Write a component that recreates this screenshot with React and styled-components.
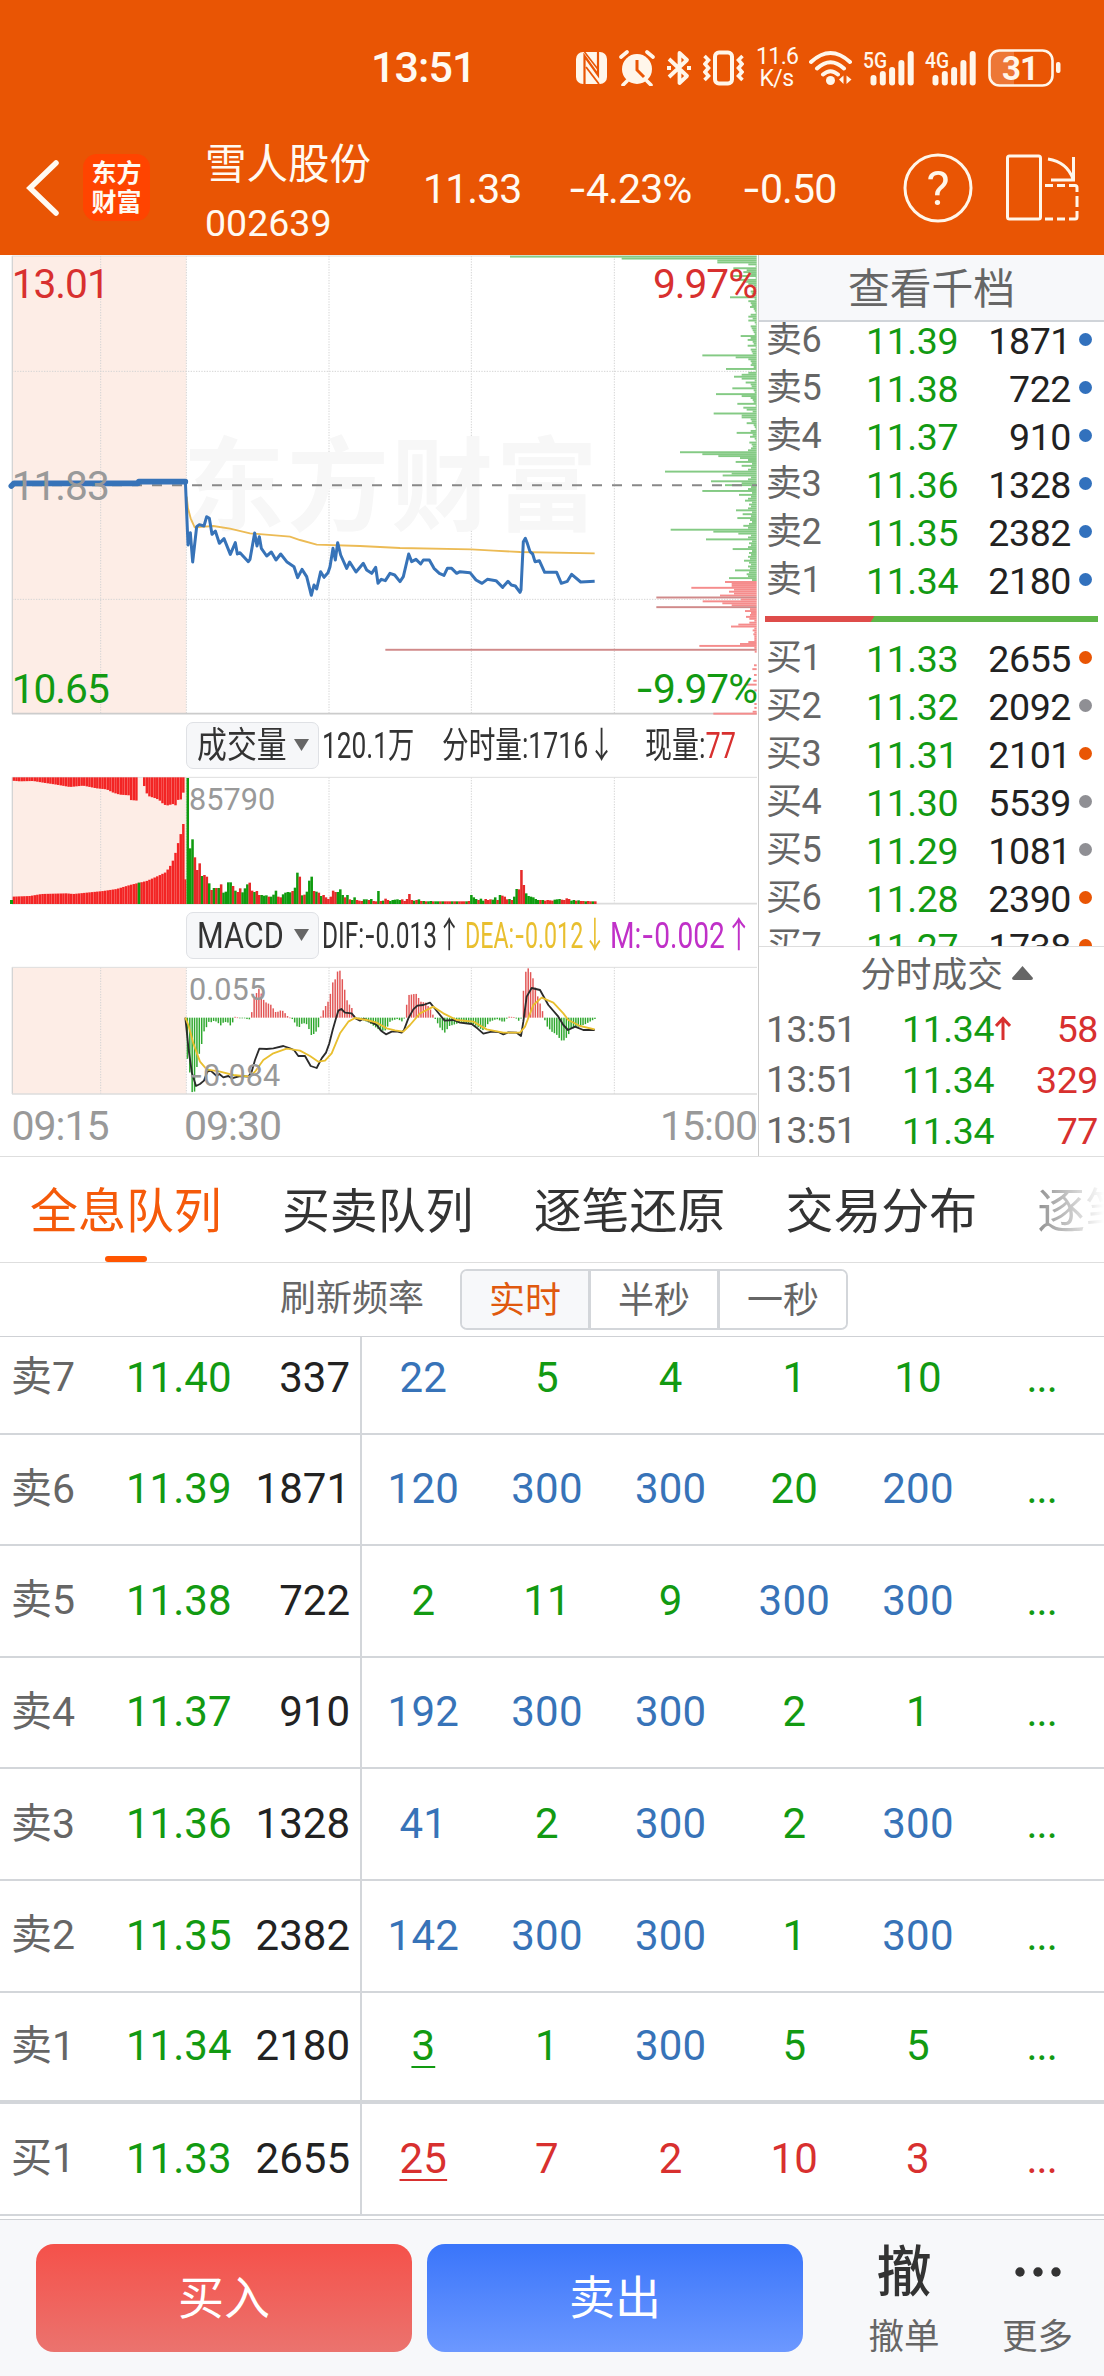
import React from "react";
import styled, { createGlobalStyle, css } from "styled-components";

const GlobalStyle = createGlobalStyle`
  * {
    box-sizing: border-box;
  }
  body {
    margin: 0;
    background: #fff;
    font-family: Roboto, "Noto Sans CJK SC", sans-serif;
    line-height: 1.2;
    color: #222;
  }
`;

const colors = {
  red: "#d8302f",
  green: "#129a12",
  blue: "#3773b8",
  orange: "#e95504",
  gray: "#666",
  light: "#999",
  dark: "#222",
  line: "#d3d6da",
};

const Phone = styled.div`
  width: 1104px;
  height: 2376px;
  overflow: hidden;
  display: flex;
  flex-direction: column;
`;

/* ---------- header ---------- */
const Header = styled.header`
  height: 255px;
  flex: none;
  background: ${colors.orange};
  color: #fffaf2;
`;
const StatusBar = styled.div`
  display: flex;
  align-items: center;
  gap: 12px;
  height: 136px;
  padding-left: 371px;
`;
const Clock = styled.div`
  width: 193px;
  font-size: 43px;
  font-weight: 500;
  letter-spacing: -0.9px;
`;
const Speed = styled.div`
  width: 41px;
  font-size: 23px;
  line-height: 22px;
  text-align: center;
  letter-spacing: -0.6px;
  white-space: nowrap;
`;
const TitleBar = styled.div`
  display: grid;
  grid-template-columns: 83px 122px 218px 145px 174px 161px 103px 1fr;
  grid-template-rows: 103px;
  align-items: center;
  height: 103px;
`;
const Logo = styled.div`
  width: 67px;
  height: 67px;
  border-radius: 14px;
  background: #ff4400;
  font-size: 25px;
  line-height: 29px;
  padding-top: 5px;
  font-weight: 700;
  text-align: center;
`;
const Stock = styled.div`
  padding-top: 12px;
  line-height: 59px;
`;
const StockName = styled.div`
  font-size: 41.5px;
`;
const StockCode = styled.div`
  font-size: 37.5px;
`;
const Quote = styled.div`
  font-size: 41px;
  letter-spacing: -0.9px;
  padding-top: 4px;
`;
// the hyphen in Roboto is too short for a minus sign
const Dash = styled.span`
  font-family: Inter, sans-serif;
`;

/* ---------- chart and order book ---------- */
const Market = styled.section`
  display: flex;
  height: 902px;
  flex: none;
  border-bottom: 1px solid #dedede;
`;
const Charts = styled.div`
  width: 758px;
  display: flex;
  flex-direction: column;
`;
const ChartSvg = styled.svg`
  display: block;
  flex: none;
`;
const Indicators = styled.div`
  display: flex;
  align-items: center;
  height: 61px;
  padding-left: 186px;
`;
const Picker = styled.div`
  display: flex;
  align-items: center;
  justify-content: space-between;
  width: 133px;
  height: 47px;
  padding: 0 9px 0 10px;
  border: 1px solid #dfe1e5;
  border-radius: 7px;
  background: #f6f7f9;
`;
const Slot = styled.div`
  width: ${(p) => p.$width}px;
  margin-left: ${(p) => p.$gap || 0}px;
  color: ${(p) => p.$color || "#333"};
  font-size: 36px;
  line-height: 46px;
  white-space: nowrap;
`;
const Narrow = styled.span`
  display: inline-block;
  transform: scaleX(${(p) => p.$scale});
  transform-origin: left center;
`;
const Axis = styled.div`
  display: flex;
  align-items: center;
  height: 61px;
  padding: 2px 1px 0 11.5px;
  font-size: 41px;
  letter-spacing: -1px;
  color: ${colors.light};
`;
const AxisLabel = styled.span`
  width: 172.5px;
  &:last-child {
    margin-left: auto;
    width: auto;
  }
`;

const Side = styled.aside`
  width: 346px;
  border-left: 1px solid #ccc;
  display: flex;
  flex-direction: column;
`;
const DepthTitle = styled.div`
  height: 67px;
  flex: none;
  background: #f7f8fa;
  border-bottom: 2px solid #d0d4d9;
  color: ${colors.gray};
  font-size: 41.8px;
  line-height: 69px;
  text-align: center;
`;
const Book = styled.div`
  height: 625px;
  flex: none;
  overflow: hidden;
  border-bottom: 1px solid #ddd;
`;
const BookSide = styled.div`
  &:first-child {
    margin-top: -5px;
  }
`;
const BookRow = styled.div`
  display: grid;
  grid-template-columns: 100px 112px 93px 1fr;
  align-items: center;
  height: 48px;
  padding-left: 7px;
  font-size: 37.5px;
  letter-spacing: -0.4px;
`;
const Label = styled.span`
  color: ${colors.gray};
  font-size: 36px;
`;
const Price = styled.span`
  color: ${colors.green};
`;
const Volume = styled.span`
  text-align: right;
`;
const Dot = styled.i`
  width: 13px;
  height: 13px;
  margin: -3px 0 0 8px;
  border-radius: 50%;
  background: ${(p) => p.$color};
`;
const Ratio = styled.div`
  height: 6px;
  margin: 11px 6px 13px;
  background: linear-gradient(122deg, #de4c4a 32.4%, #5db648 32.6%);
`;
const TradesTitle = styled.div`
  display: flex;
  align-items: center;
  justify-content: center;
  gap: 9px;
  height: 57px;
  flex: none;
  padding-left: 30px;
  color: ${colors.gray};
  font-size: 35.7px;
`;
const TradeRow = styled.div`
  display: grid;
  grid-template-columns: 136px 93px 1fr auto;
  align-items: center;
  height: 51px;
  padding: 1px 6px 0 7px;
  font-size: 37.5px;
  letter-spacing: -0.4px;
`;
const Time = styled.span`
  color: ${colors.gray};
  font-size: 37px;
`;
const Qty = styled.span`
  color: ${colors.red};
`;

/* ---------- tabs ---------- */
const Tabs = styled.nav`
  display: flex;
  flex: none;
  gap: 60px;
  height: 106px;
  padding-left: 30px;
  border-bottom: 1px solid #dedede;
  overflow: hidden;
  mask-image: linear-gradient(#000, #000), linear-gradient(90deg, #000 980px, transparent 1104px);
  mask-size: 100% 1px, 100% 105px;
  mask-position: 0 105px, 0 0;
  mask-repeat: no-repeat;
`;
const Tab = styled.div`
  flex: none;
  width: 191.8px;
  display: flex;
  flex-direction: column;
  align-items: center;
  font-size: 47.9px;
  line-height: 87px;
  padding-top: 12px;
  color: ${(p) => (p.$active ? "#f55a0a" : "#333")};
  white-space: nowrap;
  ${(p) =>
    p.$active &&
    css`
      &::after {
        content: "";
        flex: none;
        width: 42px;
        height: 6px;
        border-radius: 3px;
        background: #ff5500;
      }
    `}
`;
const Refresh = styled.div`
  display: flex;
  align-items: center;
  flex: none;
  height: 74px;
  padding-left: 280px;
  color: ${colors.gray};
  font-size: 36px;
  border-bottom: 1px solid #cfd1d5;
`;
const Segments = styled.div`
  display: flex;
  width: 388px;
  height: 61px;
  margin-left: 36px;
  border: 2px solid ${colors.line};
  border-radius: 7px;
  overflow: hidden;
`;
const Segment = styled.div`
  flex: 1;
  text-align: center;
  line-height: 60px;
  color: ${(p) => (p.$active ? "#e0590e" : colors.gray)};
  background: ${(p) => (p.$active ? "#f7f8fa" : "#fff")};
  & + & {
    border-left: 3px solid ${colors.line};
  }
`;

/* ---------- queue table ---------- */
const Queue = styled.div`
  height: 882px;
  flex: none;
  overflow: hidden;
  font-size: 42px;
`;
const QueueRow = styled.div`
  display: grid;
  grid-template-columns: 362px repeat(6, 1fr);
  height: 111.6px;
  border-bottom: ${(p) => (p.$thick ? 4 : 2)}px solid ${colors.line};
  &:first-child {
    margin-top: -14px;
  }
`;
const QueueHead = styled.div`
  display: grid;
  grid-template-columns: 115px 1fr auto;
  align-items: center;
  padding: 0 10px 0 11px;
  border-right: 2px solid ${colors.line};
`;
const QueueLabel = styled.span`
  font-size: 41px;
  color: ${colors.gray};
`;
const Cell = styled.div`
  display: flex;
  align-items: center;
  justify-content: center;
  color: ${(p) => p.$color};
  margin-left: -1px;
  letter-spacing: ${(p) => (p.$dots ? -1 : 0.2)}px;
  text-decoration: ${(p) => (p.$first ? "underline" : "none")};
  text-decoration-thickness: 2px;
  text-underline-offset: 6px;
`;

/* ---------- bottom bar ---------- */
const BottomBar = styled.footer`
  display: flex;
  flex: 1;
  padding: 24px 0 0 36px;
  background: #f7f8fa;
  border-top: 1px solid #cfd1d5;
`;
const TradeButton = styled.button`
  width: 376px;
  height: 108px;
  margin-right: 15px;
  padding: 0;
  border: 0;
  border-radius: 18px;
  background: ${(p) =>
    p.$sell
      ? "linear-gradient(#3a75fa, #6c98ff)"
      : "linear-gradient(#f5514a, #eb736e)"};
  color: #fff;
  font: 46px/108px Roboto, "Noto Sans CJK SC", sans-serif;
`;
const Action = styled.div`
  display: flex;
  flex-direction: column;
  align-items: center;
  width: ${(p) => p.$width}px;
  color: ${colors.gray};
  font-size: 35.5px;
  line-height: 50px;
`;
const ActionIcon = styled.div`
  display: flex;
  align-items: center;
  justify-content: center;
  height: 66px;
  margin-top: -5px;
  margin-bottom: 7px;
  color: #333;
  font-size: 55px;
  font-weight: 500;
`;

/* ---------- data ---------- */
const asks = [
  ["卖6", "11.39", 1871],
  ["卖5", "11.38", 722],
  ["卖4", "11.37", 910],
  ["卖3", "11.36", 1328],
  ["卖2", "11.35", 2382],
  ["卖1", "11.34", 2180],
];
const bids = [
  ["买1", "11.33", 2655, colors.orange],
  ["买2", "11.32", 2092, "#8f8f94"],
  ["买3", "11.31", 2101, colors.orange],
  ["买4", "11.30", 5539, "#8f8f94"],
  ["买5", "11.29", 1081, "#8f8f94"],
  ["买6", "11.28", 2390, colors.orange],
  ["买7", "11.27", 1738, colors.orange],
];
const trades = [
  { time: "13:51", price: "11.34", qty: 58, up: true },
  { time: "13:51", price: "11.34", qty: 329 },
  { time: "13:51", price: "11.34", qty: 77 },
];
const queue = [
  ["卖7", "11.40", 337, [22, 5, 4, 1, 10]],
  ["卖6", "11.39", 1871, [120, 300, 300, 20, 200]],
  ["卖5", "11.38", 722, [2, 11, 9, 300, 300]],
  ["卖4", "11.37", 910, [192, 300, 300, 2, 1]],
  ["卖3", "11.36", 1328, [41, 2, 300, 2, 300]],
  ["卖2", "11.35", 2382, [142, 300, 300, 1, 300]],
  ["卖1", "11.34", 2180, [3, 1, 300, 5, 5]],
  ["买1", "11.33", 2655, [25, 7, 2, 10, 3]],
];

// All chart coordinates are in thirds of a pixel.
const priceLine =
  "556,690 564,885 571,848 578,936 590,830 598,824 612,828 620,800 628,805 636,853 646,843 658,880 672,866 691,913 706,878 712,912 720,908 745,935 750,928 764,849 771,888 778,860 784,895 800,918 814,906 828,930 842,912 860,935 882,950 893,983 906,958 920,980 934,1036 942,1005 950,1017 962,965 972,982 984,968 990,950 999,895 1006,930 1013,878 1022,915 1040,955 1049,936 1068,966 1090,940 1100,960 1115,970 1127,952 1134,1000 1144,988 1156,992 1170,970 1184,975 1200,995 1210,980 1226,912 1235,935 1248,928 1262,942 1270,930 1288,930 1302,955 1318,970 1332,976 1342,955 1355,955 1370,970 1380,965 1410,968 1428,990 1446,1000 1462,988 1488,992 1508,1012 1524,994 1534,1005 1546,1008 1560,1027 1563,1020 1570,875 1576,865 1582,880 1590,905 1598,912 1605,935 1618,932 1634,967 1670,967 1684,1000 1702,994 1715,973 1742,996 1784,994";
const averageLine =
  "560,740 564,775 572,805 584,832 640,828 690,836 750,850 870,860 900,870 950,884 1080,888 1200,894 1414,898 1480,902 1560,906 1784,910";
const difLine =
  "556,953 566,1050 576,1120 588,1158 600,1152 612,1142 622,1115 632,1112 650,1128 658,1122 670,1132 685,1128 695,1135 720,1128 745,1130 755,1115 765,1080 778,1046 800,1047 820,1045 850,1038 870,1045 882,1050 895,1068 915,1068 932,1098 950,1104 965,1075 978,1058 988,1030 998,990 1008,955 1015,932 1024,927 1035,938 1055,940 1068,956 1080,962 1090,956 1110,965 1130,975 1145,994 1158,1003 1175,995 1190,994 1205,998 1212,990 1225,955 1240,928 1252,917 1270,915 1290,908 1308,930 1334,962 1360,960 1380,968 1415,972 1432,985 1450,1001 1475,995 1495,996 1510,1003 1525,997 1550,998 1563,1008 1570,965 1580,890 1595,864 1620,870 1645,915 1675,950 1690,975 1704,990 1725,980 1750,990 1784,990";
const deaLine =
  "556,953 565,975 580,1030 600,1085 620,1108 660,1115 700,1125 750,1130 765,1115 790,1080 820,1060 860,1046 900,1052 930,1068 955,1085 975,1082 995,1060 1020,1000 1045,965 1065,954 1100,960 1130,968 1160,985 1185,991 1210,995 1230,975 1260,940 1300,920 1330,940 1370,960 1420,965 1460,988 1510,998 1560,998 1575,980 1600,915 1625,893 1660,908 1690,940 1705,960 1740,978 1784,988";

// left edge of each price level, by y
const askDepth = {
  20: 450, 26: 785, 32: 1072, 38: 1072, 44: 1165, 55: 1120, 61: 1160, 67: 1150, 73: 1170, 79: 1115,
  90: 1130, 96: 1150, 102: 1165, 143: 1110, 155: 1165, 172: 1170, 201: 1165, 213: 1165, 230: 1172,
  259: 1142, 271: 1163, 288: 1163, 300: 1172, 317: 1027, 323: 1127, 329: 1165, 346: 1172, 358: 1098,
  370: 1165, 375: 1145, 381: 1122, 387: 1145, 399: 1157, 416: 1117, 433: 1068, 439: 1145, 445: 1172,
  462: 1132, 474: 1150, 480: 1160, 491: 1061, 497: 1145, 503: 1145, 520: 1160, 549: 1130, 561: 1170,
  578: 1168, 607: 960, 613: 1027, 619: 1075, 625: 1140, 636: 1127, 648: 1145, 665: 915, 671: 1115,
  677: 1088, 694: 1053, 700: 1145, 706: 1095, 723: 1027, 735: 1137, 752: 1155, 782: 1128, 793: 1148,
  805: 1132, 828: 1150, 840: 932, 846: 1060, 852: 1135, 869: 1038, 898: 1118, 910: 1167, 933: 1152,
  962: 1125, 974: 1160, 986: 1107,
};
const bidDepth = {
  997: 1095, 1003: 1115, 1009: 1115, 1014: 994, 1020: 1122, 1026: 1107, 1032: 1122, 1038: 1080,
  1043: 889, 1049: 1143, 1055: 1028, 1061: 1087, 1067: 1115, 1072: 889, 1078: 1170, 1084: 1155,
  1096: 1170, 1101: 1158, 1107: 1168, 1119: 1168, 1125: 1135, 1131: 1113, 1142: 1178, 1154: 1180,
  1177: 1165, 1183: 1140, 1189: 1018, 1200: 76, 1206: 1184, 1246: 1182, 1258: 1177, 1275: 1182,
  1290: 1180, 1305: 1160, 1323: 1183, 1360: 1183, 1372: 1183, 1385: 1178, 1391: 1060,
};

// per minute, minus means a falling minute
const volumes = [
  -378, -167, -194, 140, 102, 122, -84, 87, 82, -62, 42, -48, 48, -48, 59, -34, -37, -65, -65, 54,
  -40, 36, 47, -35, -47, -59, 64, 40, -36, 39, 27, -27, -25, -26, 22, -22, -28, -40, 22, 20, -29,
  -34, -36, -35, 39, -49, -94, 82, -26, 28, -37, -70, -82, 39, -37, 34, -24, 27, 20, 15, 22, 40, 36,
  -36, -44, -27, 20, -27, 14, -12, -20, 12, 10, 9, -14, -14, 12, -15, 9, 8, -39, 9, -10, 16, 12, -9,
  -12, -13, -14, -12, 14, 9, 15, 30, 12, -10, 12, -14, 9, -9, 8, -8, -9, 8, -8, -8, 8, -8, 8, 8, 8,
  -8, 8, -8, 8, 8, 8, -8, 9, -27, -20, -15, 12, -16, -10, 15, 12, 14, -13, -20, 12, -27, 25, 22, 14,
  -15, 12, -22, -45, 44, 102, 57, -32, -24, -22, -20, -15, -12, 12, -12, 10, 12, 11, 10, -13, -14,
  -15, 13, 12, 17, 15, -10, -12, 10, -11, 9, 9, -8, 9, 8, -8, 8,
];

const auctionTop = [
  [36, 10], [60, 12], [100, 11], [130, 16], [170, 22], [210, 29], [250, 25], [290, 33], [320, 36],
  [340, 46], [360, 52], [388, 54], [391, 68], [414, 70], [415, 0], [429, 0], [430, 16], [438, 43],
  [445, 56], [470, 64], [480, 70], [490, 80], [500, 85], [520, 80], [526, 86], [533, 68], [545, 66],
  [549, 46], [556, 46],
];
const auctionBottom = [
  [36, 22], [90, 24], [125, 30], [200, 32], [220, 30], [260, 34], [310, 39], [350, 45], [390, 57],
  [440, 69], [470, 82], [497, 95], [510, 112], [520, 132], [528, 157], [535, 184], [541, 197],
  [546, 240], [556, 240],
];
const macdBars = [
  [560, -113], [568, -155], [577, -229], [585, -220], [592, -130], [600, -100], [607, -70],
  [614, -30], [621, -28], [628, -8], [635, -15], [643, -8], [657, -18], [664, -25], [671, -12],
  [685, -15], [692, -25], [699, -12], [706, 5], [713, 0], [735, 0], [742, -5], [750, -5], [757, 25],
  [764, 70], [771, 75], [778, 90], [786, 65], [793, 48], [814, 38], [821, 25], [828, 15], [842, 22],
  [850, 20], [862, 5], [870, 0], [878, -5], [892, -28], [900, -28], [907, -15], [921, -20],
  [935, -55], [950, -40], [957, -25], [964, 12], [985, 50], [992, 75], [1000, 115], [1007, 115],
  [1014, 145], [1021, 140], [1028, 110], [1042, 48], [1056, 28], [1063, 5], [1070, -3], [1090, -8],
  [1107, -15], [1142, -40], [1157, -38], [1171, -10], [1192, -4], [1207, -12], [1213, -2],
  [1219, 35], [1226, 68], [1248, 72], [1262, 48], [1277, 45], [1291, 25], [1298, 10], [1305, -3],
  [1320, -30], [1334, -45], [1348, -25], [1377, -16], [1415, -16], [1448, -38], [1469, -12],
  [1490, -4], [1511, -14], [1520, -3], [1526, 3], [1541, 2], [1548, -2], [1562, -15], [1569, 70],
  [1576, 135], [1583, 150], [1590, 140], [1597, 125], [1611, 70], [1626, 25], [1633, -3],
  [1640, -25], [1655, -42], [1669, -50], [1683, -68], [1690, -70], [1704, -55], [1711, -35],
  [1726, -30], [1755, -20], [1784, -4],
];

const valueAt = (points, x) => {
  const next = points.findIndex((p) => p[0] >= x);
  if (next === 0) return points[0][1];
  if (next < 0) return points[points.length - 1][1];
  const [x0, y0] = points[next - 1];
  const [x1, y1] = points[next];
  return y0 + ((y1 - y0) * (x - x0)) / (x1 - x0);
};
const range = (n) => Array.from({ length: n }, (_, i) => i);

/* ---------- charts ---------- */
const Grid = ({ top, bottom, strong }) => (
  <>
    <rect x="36" y={top} width="523" height={bottom - top} fill="#fdede6" />
    <g stroke="#d4d4d4" strokeWidth="3" strokeDasharray="4 4">
      {[302, 559, 987, 1414, 1843].map((x) => (
        <path key={x} d={`M${x} ${top}V${bottom}`} />
      ))}
    </g>
    <path d={`M37 ${top}V${bottom}`} stroke="#d4d4d4" strokeWidth="4" />
    <path d={`M36 ${top}H2271`} stroke="#dedede" strokeWidth="3" />
    <path d={`M36 ${bottom}H2271`} stroke={strong ? "#ccc" : "#dcdcdc"} strokeWidth="5" />
  </>
);

const DepthBars = () => (
  <g>
    {range(237).map((i) => {
      const y = 20 + i * 5.81;
      const bid = y > 993;
      const table = bid ? bidDepth : askDepth;
      const hit = Object.keys(table).find((k) => Math.abs(k - y) < 2.9);
      const base = y > 1210 ? 1190 : y > 1090 ? 1183 : y > 590 ? 1164 + ((i * 7) % 5) * 3 : 1172 + ((i * 7) % 6) * 3;
      const left = hit ? table[hit] : base;
      return (
        <rect
          key={i}
          x={left + 1080}
          y={y - 3}
          width={1190 - left}
          height="5.81"
          fill={bid ? (left < 900 ? "#d08a8a" : "#f58c8c") : "#84ca84"}
        />
      );
    })}
  </g>
);

const MinuteChart = () => (
  <ChartSvg width="758" height="460" viewBox="0 15 2274 1380">
    <Grid top={18} bottom={1391} strong />
    <text x="548" y="820" fontSize="306" fontWeight="700" letterSpacing="7" fill="#f7f7f7">
      东方财富
    </text>
    <g fill="none">
      <path d="M36 364H2271M36 1048H2271" stroke="#d4d4d4" strokeWidth="3" strokeDasharray="4 4" />
      <DepthBars />
      <path d="M36 706H2271" stroke="#888" strokeWidth="6" strokeDasharray="30 30" />
      <polyline points={averageLine} stroke="#ecbb55" strokeWidth="5.5" />
      <path d="M34 708L42 700H414L416 695H556" stroke={colors.blue} strokeWidth="17" strokeLinejoin="round" strokeLinecap="round" />
      <polyline points={priceLine} stroke={colors.blue} strokeWidth="9" strokeLinejoin="round" />
    </g>
    <g fontSize="122" letterSpacing="-3">
      <text x="35" y="145" fill={colors.red}>13.01</text>
      <text x="35" y="750" fill="#999">11.83</text>
      <text x="35" y="1360" fill={colors.green}>10.65</text>
      <text x="2271" y="145" fill={colors.red} textAnchor="end">9.97%</text>
      <text x="2271" y="1360" fill={colors.green} textAnchor="end">
        <tspan fontFamily="Inter">-</tspan>9.97%
      </text>
    </g>
  </ChartSvg>
);

const VolumeChart = () => (
  <ChartSvg width="758" height="129" viewBox="0 228 2274 387">
    <Grid top={232} bottom={611} />
    <g fill="#f32424">
      {range(66).map((i) => {
        const x = 38 + i * 7.82;
        const up = valueAt(auctionBottom, x + 4);
        return (
          <React.Fragment key={i}>
            <rect x={x} y="232" width="7.4" height={valueAt(auctionTop, x + 4)} />
            <rect x={x} y={612 - up} width="7.4" height={up} />
          </React.Fragment>
        );
      })}
      <rect x="553" y="538" width="6" height="74" />
    </g>
    <g fill="#0f9b0f">
      <rect x="30" y="600" width="9" height="12" />
      <rect x="413" y="548" width="8" height="64" />
    </g>
    {volumes.map((v, i) => (
      <rect
        key={i}
        x={559.5 + i * 7.15}
        y={612 - Math.abs(v)}
        width="7.6"
        height={Math.abs(v)}
        fill={v > 0 ? "#e62a2a" : "#0f9b0f"}
      />
    ))}
    <text x="567" y="330" fontSize="92" fill="#999">85790</text>
  </ChartSvg>
);

const MacdChart = () => (
  <ChartSvg width="758" height="129" viewBox="0 798 2274 387">
    <Grid top={802} bottom={1182} />
    {range(172).map((i) => {
      const x = 562 + i * 7.15;
      const v = valueAt(macdBars, x);
      return (
        <rect
          key={i}
          x={x - 2}
          y={v > 0 ? 953 - v : 953}
          width="4.4"
          height={Math.max(Math.abs(v), 2)}
          fill={v > 0 ? "#e25555" : "#2fa82f"}
        />
      );
    })}
    <g fill="none" strokeWidth="5.5" strokeLinejoin="round">
      <polyline points={difLine} stroke="#2b2b2b" />
      <polyline points={deaLine} stroke="#e9bf2f" />
    </g>
    <g fontSize="92" fill="#999">
      <text x="567" y="900">0.055</text>
      <text x="567" y="1158">
        <tspan fontFamily="Inter">-</tspan>0.084
      </text>
    </g>
  </ChartSvg>
);

/* ---------- icons ---------- */
const NfcIcon = () => (
  <svg width="31" height="34" viewBox="0 0 31 34">
    <rect x="0" y="1" width="31" height="32" rx="7" fill="#fff6ea" />
    <g fill="none" stroke={colors.orange} strokeWidth="2.2">
      <path d="M8.5 33V5L22 24V1" />
      <path d="M8.5 1L22.5 19" strokeWidth="1.6" />
      <path d="M10 16L23 33" strokeWidth="1.8" />
    </g>
  </svg>
);
const AlarmIcon = () => (
  <svg width="36" height="36" viewBox="0 0 36 36">
    <circle cx="18" cy="19" r="15" fill="#fff6ea" />
    <path d="M2 7L8 2M34 7L28 2M8 31L4 35M28 31L32 35" stroke="#fff6ea" strokeWidth="3.6" strokeLinecap="round" />
    <path d="M18 10V20L25 27" fill="none" stroke={colors.orange} strokeWidth="3" />
  </svg>
);
const BluetoothIcon = () => (
  <svg width="24" height="36" viewBox="0 0 24 36" fill="none" stroke="#fff6ea" strokeWidth="3.8">
    <path d="M2 9L20 26L12.5 33V3L20 10L2 27" strokeLinejoin="round" />
    <path d="M0 18H4M20 18H24" />
  </svg>
);
const VibrateIcon = () => (
  <svg width="41" height="36" viewBox="0 0 41 36" fill="none" stroke="#fff6ea">
    <rect x="12" y="2.5" width="17" height="31" rx="4" strokeWidth="4" />
    <path d="M1.5 6L5.5 10L2 14L5.5 18L2 22L5.5 26L1.5 30M39.5 6L35.5 10L39 14L35.5 18L39 22L35.5 26L39.5 30" strokeWidth="3.6" />
  </svg>
);
const WifiIcon = () => (
  <svg width="43" height="36" viewBox="0 0 43 36" fill="none" stroke="#fff6ea" strokeWidth="4" strokeLinecap="round">
    <path d="M2 12Q21.5 -6 41 12M8 18.5Q21.5 6 35 18.5M14 24.5Q21.5 18 29 24.5" />
    <circle cx="21.5" cy="30.5" r="4.5" fill="#fff6ea" stroke="none" />
    <path d="M34.5 25.5V34L30 29.5ZM37.5 25.5V34L42.5 29.5Z" fill="#fff6ea" stroke="none" />
  </svg>
);
const StatusSvg = styled.svg`
  overflow: visible;
`;
const SignalIcon = ({ label }) => (
  <StatusSvg width="50" height="36" viewBox="0 0 50 36" fill="#fff6ea">
    <text x="-1" y="17.5" fontSize="22" fontWeight="500" textLength="24" lengthAdjust="spacingAndGlyphs">
      {label}
    </text>
    {[25, 21, 17, 10, 1].map((y, i) => (
      <rect key={y} x={6.5 + i * 9.3} y={y} width="6" height={35.5 - y} rx="3" />
    ))}
  </StatusSvg>
);
const BatteryIcon = () => (
  <svg width="74" height="38" viewBox="0 0 74 38">
    <path d="M26 1V37H12Q1.5 37 1.5 26V12Q1.5 1 12 1Z" fill="#fff" opacity="0.2" />
    <rect x="1.5" y="1.5" width="63" height="35" rx="10" fill="none" stroke="#fff6ea" strokeWidth="2.6" />
    <rect x="68" y="13" width="4.5" height="11" rx="2" fill="#fff6ea" />
    <text x="32" y="31" fontSize="33" fontWeight="700" textAnchor="middle" fill="#fff6ea" letterSpacing="-1">
      31
    </text>
  </svg>
);
const BackIcon = () => (
  <svg width="83" height="60" viewBox="0 0 83 60">
    <path d="M56 5L30 30L56 55" fill="none" stroke="#fffaf2" strokeWidth="5.5" strokeLinecap="round" />
  </svg>
);
const HelpIcon = () => (
  <svg width="70" height="70" viewBox="0 0 70 70">
    <circle cx="35" cy="35" r="33" fill="none" stroke="#fff6ea" strokeWidth="3" />
    <text x="35" y="52" fontSize="49" textAnchor="middle" fill="#fff6ea">?</text>
  </svg>
);
const RotateIcon = () => (
  <svg width="74" height="70" viewBox="0 0 74 70" fill="none" stroke="#fff6ea" strokeWidth="3">
    <rect x="1.5" y="3" width="33" height="63" rx="2" />
    <path d="M42 6Q61 9 67 26M67.5 4V27H45" />
    <path d="M39 32.5H47M51 32.5H59M63 32.5H69Q71 32.5 71 34.5V39M71 43V54M71 58V64Q71 66 69 66H63M59 66H51M47 66H39" />
  </svg>
);
const Caret = ({ up }) => (
  <svg width={up ? 21 : 15} height={up ? 24 : 13} viewBox={up ? "0 0 21 24" : "0 0 15 13"} fill="#666">
    {up ? <path d="M10.5 2L21 14Q21 16 19 16H2Q0 16 0 14Z" /> : <path d="M0 0H15L7.5 12Z" />}
  </svg>
);
const UpArrow = () => (
  <svg width="16" height="26" viewBox="0 0 16 26" fill="none" stroke={colors.red} strokeWidth="3">
    <path d="M8 24V2M1 10L8 2.5L15 10" />
  </svg>
);
const MoreIcon = () => (
  <svg width="48" height="12" viewBox="0 0 48 12" fill="#333">
    <circle cx="6" cy="6" r="4.7" />
    <circle cx="24" cy="6" r="4.7" />
    <circle cx="42" cy="6" r="4.7" />
  </svg>
);

const BookRows = ({ rows }) => (
  <BookSide>
    {rows.map(([label, price, volume, dot]) => (
      <BookRow key={label}>
        <Label>{label}</Label>
        <Price>{price}</Price>
        <Volume>{volume}</Volume>
        <Dot $color={dot || "#3271bd"} />
      </BookRow>
    ))}
  </BookSide>
);

const QueueLine = ({ row }) => {
  const [label, price, volume, orders] = row;
  const own = label.startsWith("买") ? colors.red : colors.green;
  const isBlue = (n) => n >= 100 || n === 22 || n === 41;
  return (
    <QueueRow $thick={label === "卖1"}>
      <QueueHead>
        <QueueLabel>{label}</QueueLabel>
        <Price>{price}</Price>
        <span>{volume}</span>
      </QueueHead>
      {orders.map((n, i) => (
        <Cell
          key={i}
          $color={isBlue(n) ? colors.blue : own}
          $first={i === 0 && label.endsWith("1")}
        >
          {n}
        </Cell>
      ))}
      <Cell $color={own} $dots>
        ...
      </Cell>
    </QueueRow>
  );
};

const App = () => {
  const [tab, setTab] = React.useState("全息队列");
  const [rate, setRate] = React.useState("实时");

  return (
    <Phone>
      <GlobalStyle />
      <Header>
        <StatusBar>
          <Clock>13:51</Clock>
          <NfcIcon />
          <AlarmIcon />
          <BluetoothIcon />
          <VibrateIcon />
          <Speed>
            11.6
            <br />
            K/s
          </Speed>
          <WifiIcon />
          <SignalIcon label="5G" />
          <SignalIcon label="4G" />
          <BatteryIcon />
        </StatusBar>
        <TitleBar>
          <BackIcon />
          <Logo>
            东方
            <br />
            财富
          </Logo>
          <Stock>
            <StockName>雪人股份</StockName>
            <StockCode>002639</StockCode>
          </Stock>
          <Quote>11.33</Quote>
          <Quote>
            <Dash>-</Dash>4.23%
          </Quote>
          <Quote>
            <Dash>-</Dash>0.50
          </Quote>
          <HelpIcon />
          <RotateIcon />
        </TitleBar>
      </Header>

      <Market>
        <Charts>
          <MinuteChart />
          <Indicators>
            <Picker>
              <Slot $width={88}>
                <Narrow $scale={0.83}>成交量</Narrow>
              </Slot>
              <Caret />
            </Picker>
            <Slot $width={118} $gap={3}>
              <Narrow $scale={0.73}>120.1万</Narrow>
            </Slot>
            <Slot $width={202} $gap={2}>
              <Narrow $scale={0.74}>分时量:1716↓</Narrow>
            </Slot>
            <Slot $width={100} $gap={1}>
              <Narrow $scale={0.75}>
                现量:<Qty>77</Qty>
              </Narrow>
            </Slot>
          </Indicators>
          <VolumeChart />
          <Indicators>
            <Picker>
              <Slot $width={88}>
                <Narrow $scale={0.85}>MACD</Narrow>
              </Slot>
              <Caret />
            </Picker>
            <Slot $width={141} $gap={3}>
              <Narrow $scale={0.68}>
                DIF:<Dash>-</Dash>0.013↑
              </Narrow>
            </Slot>
            <Slot $width={144} $gap={2} $color="#e9bf2f">
              <Narrow $scale={0.645}>
                DEA:<Dash>-</Dash>0.012↓
              </Narrow>
            </Slot>
            <Slot $width={138} $gap={1} $color="#c030c8">
              <Narrow $scale={0.78}>
                M:<Dash>-</Dash>0.002↑
              </Narrow>
            </Slot>
          </Indicators>
          <MacdChart />
          <Axis>
            <AxisLabel>09:15</AxisLabel>
            <AxisLabel>09:30</AxisLabel>
            <AxisLabel>15:00</AxisLabel>
          </Axis>
        </Charts>

        <Side>
          <DepthTitle>查看千档</DepthTitle>
          <Book>
            <BookRows rows={asks} />
            <Ratio />
            <BookRows rows={bids} />
          </Book>
          <TradesTitle>
            分时成交
            <Caret up />
          </TradesTitle>
          {trades.map((t) => (
            <TradeRow key={t.qty}>
              <Time>{t.time}</Time>
              <Price>{t.price}</Price>
              <span>{t.up && <UpArrow />}</span>
              <Qty>{t.qty}</Qty>
            </TradeRow>
          ))}
        </Side>
      </Market>

      <Tabs>
        {["全息队列", "买卖队列", "逐笔还原", "交易分布", "逐笔成交"].map((name) => (
          <Tab key={name} $active={tab === name} onClick={() => setTab(name)}>
            {name}
          </Tab>
        ))}
      </Tabs>
      <Refresh>
        刷新频率
        <Segments>
          {["实时", "半秒", "一秒"].map((name) => (
            <Segment key={name} $active={rate === name} onClick={() => setRate(name)}>
              {name}
            </Segment>
          ))}
        </Segments>
      </Refresh>

      <Queue>
        {queue.map((row) => (
          <QueueLine key={row[0]} row={row} />
        ))}
      </Queue>

      <BottomBar>
        <TradeButton>买入</TradeButton>
        <TradeButton $sell>卖出</TradeButton>
        <Action $width={172}>
          <ActionIcon>撤</ActionIcon>
          撤单
        </Action>
        <Action $width={95}>
          <ActionIcon>
            <MoreIcon />
          </ActionIcon>
          更多
        </Action>
      </BottomBar>
    </Phone>
  );
};

export default App;
